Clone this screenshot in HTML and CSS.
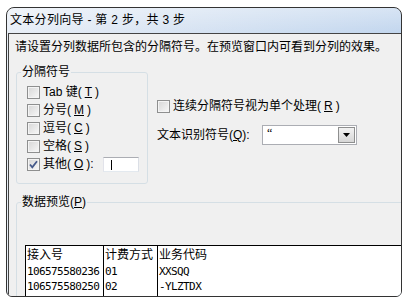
FILE: index.html
```html
<!DOCTYPE html>
<html lang="zh-CN">
<head>
  <meta charset="UTF-8">
  <title>文本分列向导</title>
  <link rel="stylesheet" href="styles.css">
</head>
<body>
  <div class="window">
    <div class="titlebar">文本分列向导 - 第 2 步，共 3 步</div>

    <div class="client">
      <p class="intro">请设置分列数据所包含的分隔符号。在预览窗口内可看到分列的效果。</p>

      <div class="options">
        <fieldset class="group delims">
          <legend>分隔符号</legend>
          <label class="check"><span class="box"></span>Tab 键(<u>T</u>)</label>
          <label class="check"><span class="box"></span>分号(<u>M</u>)</label>
          <label class="check"><span class="box"></span>逗号(<u>C</u>)</label>
          <label class="check"><span class="box"></span>空格(<u>S</u>)</label>
          <label class="check">
            <span class="box">
              <svg width="11" height="11" viewBox="0 0 11 11"><path d="M2 5.5 L4.3 8.3 L9 2.2" fill="none" stroke="#45598a" stroke-width="1.8"/></svg>
            </span>其他(<u>O</u>):
            <span class="textbox"><span class="caret"></span></span>
          </label>
        </fieldset>

        <div class="side">
          <label class="check"><span class="box"></span>连续分隔符号视为单个处理(<u>R</u>)</label>
          <div class="qualifier">
            <span class="qualifier-label">文本识别符号(<u>Q</u>):</span>
            <div class="combo">
              <span class="combo-value">“</span>
              <span class="combo-drop">
                <svg width="7" height="4" viewBox="0 0 7 4"><path d="M0 0 H7 L3.5 4 Z" fill="#000"/></svg>
              </span>
            </div>
          </div>
        </div>
      </div>

      <fieldset class="group preview">
        <legend>数据预览(<u>P</u>)</legend>
        <table class="preview-table">
          <colgroup>
            <col class="col-num">
            <col class="col-fee">
            <col>
          </colgroup>
          <thead>
            <tr>
              <th>接入号</th>
              <th>计费方式</th>
              <th>业务代码</th>
            </tr>
          </thead>
          <tbody>
            <tr>
              <td>106575580236</td>
              <td>01</td>
              <td>XXSQQ</td>
            </tr>
            <tr class="last">
              <td>106575580250</td>
              <td>02</td>
              <td>-YLZTDX</td>
            </tr>
          </tbody>
        </table>
      </fieldset>
    </div>
  </div>
</body>
</html>
```

FILE: styles.css
```css
body {
  margin: 0;
  padding: 7px 0 0 6px;
  background-color: #fff;
  font-family: "Liberation Sans", "Noto Sans CJK SC", sans-serif;
  font-size: 12px;
  line-height: 14px;
  color: #000;
}
.window {
  width: 394px;
  height: 288px;
  border: 1px solid #333;
  border-radius: 8px 8px 6px 6px;
  overflow: hidden;
  background: linear-gradient(to right, #e8eef6, #c2d6ee);
  display: flex;
  flex-direction: column;
}
.titlebar {
  height: 25px;
  line-height: 25px;
  padding-left: 3px;
  letter-spacing: 0.3px;
  background: linear-gradient(to bottom, rgba(255,255,255,0.35), rgba(255,255,255,0));
}
.client {
  flex: 1;
  margin-left: 1px;
  border-left: 1px solid #444;
  border-top: 1px solid #444;
  background-color: #f0f0f0;
  overflow: hidden;
}
.intro {
  margin: 0;
  padding: 6px 0 0 6px;
  white-space: nowrap;
}
u {
  text-decoration: underline;
  text-underline-offset: 1px;
}
.options {
  display: flex;
  gap: 9px;
  margin: 11px 0 0 7px;
}
.group {
  margin: 0;
  border: 1px solid #d5dfe5;
  border-radius: 3px;
  min-width: 0;
}
.group legend {
  padding: 0 1px;
}
.delims {
  box-sizing: border-box;
  width: 132px;
  height: 119px;
  padding: 4px 8px 0 10px;
}
.delims legend {
  margin-left: -6px;
}
.check {
  display: flex;
  align-items: center;
  height: 18px;
  gap: 3px;
  white-space: nowrap;
}
.box {
  box-sizing: border-box;
  width: 13px;
  height: 13px;
  flex: none;
  display: flex;
  align-items: center;
  justify-content: center;
  border: 1px solid #8e8f8f;
  background: linear-gradient(135deg, #d6d6d6, #f8f8f8);
  box-shadow: inset 0 0 0 1px #f4f4f4;
}
.textbox {
  box-sizing: border-box;
  width: 36px;
  height: 15px;
  margin-left: auto;
  padding: 2px 0 0 7px;
  border: 1px solid #abadb3;
  border-color: #abadb3 #dbdfe6 #e3e9ef #e2e3ea;
  background-color: #fff;
}
.caret {
  display: block;
  width: 1px;
  height: 10px;
  background-color: #000;
}
.side {
  padding-top: 32px;
  display: flex;
  flex-direction: column;
}
.qualifier {
  display: flex;
  align-items: center;
  margin-top: 10px;
  height: 20px;
}
.qualifier-label {
  width: 105px;
  white-space: nowrap;
}
.combo {
  box-sizing: border-box;
  width: 95px;
  height: 20px;
  display: flex;
  justify-content: space-between;
  border: 1px solid #abadb3;
  background-color: #fff;
}
.combo-value {
  padding: 0 0 0 4px;
  font-family: "Liberation Serif", serif;
  font-size: 12px;
  line-height: 14px;
}
.combo-drop {
  box-sizing: border-box;
  width: 17px;
  margin: 1px;
  display: flex;
  align-items: center;
  justify-content: center;
  border: 1px solid #8e8f8f;
  background: linear-gradient(to bottom, #f2f2f2, #d6d6d6);
}
.preview {
  margin: 11px -30px 0 7px;
  padding: 36px 0 0 8px;
}
.preview legend {
  margin-left: -4px;
}
.preview-table {
  width: 420px;
  table-layout: fixed;
  border-collapse: collapse;
  border: 1px solid #000;
  background-color: #fff;
}
.col-num {
  width: 78px;
}
.col-fee {
  width: 54px;
}
.preview-table th,
.preview-table td {
  border-left: 1px solid #000;
  border-right: 1px solid #000;
  padding: 0 0 0 1px;
  text-align: left;
  vertical-align: top;
  white-space: nowrap;
  overflow: hidden;
}
.preview-table th {
  height: 18px;
  font-weight: normal;
  line-height: 18px;
}
.preview-table td {
  height: 15px;
  line-height: 15px;
  font-family: "DejaVu Sans Mono", monospace;
  font-size: 11px;
  letter-spacing: -0.6px;
}
.preview-table .last td {
  height: 20px;
}
```
